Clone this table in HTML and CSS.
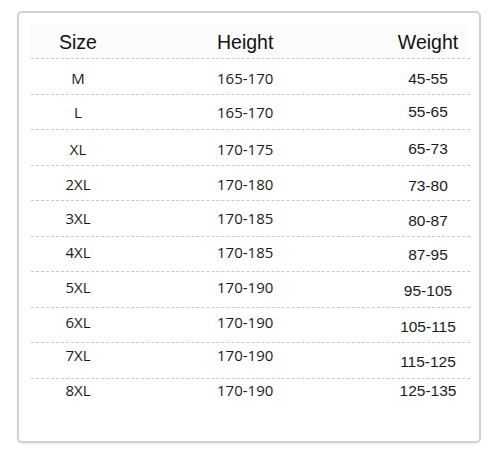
FILE: index.html
```html
<!DOCTYPE html>
<html>
<head>
<meta charset="utf-8">
<link rel="stylesheet" href="styles.css">
</head>
<body>
<div class="card">
  <div class="table">
    <div class="row head"><div class="c1">Size</div><div class="c2">Height</div><div class="c3">Weight</div></div>
    <div class="row r1"><div class="c1">M</div><div class="c2">165-170</div><div class="c3">45-55</div></div>
    <div class="row r2"><div class="c1">L</div><div class="c2">165-170</div><div class="c3">55-65</div></div>
    <div class="row r3"><div class="c1">XL</div><div class="c2">170-175</div><div class="c3">65-73</div></div>
    <div class="row r4"><div class="c1">2XL</div><div class="c2">170-180</div><div class="c3">73-80</div></div>
    <div class="row r5"><div class="c1">3XL</div><div class="c2">170-185</div><div class="c3">80-87</div></div>
    <div class="row r6"><div class="c1">4XL</div><div class="c2">170-185</div><div class="c3">87-95</div></div>
    <div class="row r7"><div class="c1">5XL</div><div class="c2">170-190</div><div class="c3">95-105</div></div>
    <div class="row r8"><div class="c1">6XL</div><div class="c2">170-190</div><div class="c3">105-115</div></div>
    <div class="row r9"><div class="c1">7XL</div><div class="c2">170-190</div><div class="c3">115-125</div></div>
    <div class="row r10 last"><div class="c1">8XL</div><div class="c2">170-190</div><div class="c3">125-135</div></div>
  </div>
</div>
</body>
</html>
```

FILE: styles.css
```css
html, body {
  margin: 0;
  padding: 0;
  background: #ffffff;
}
body {
  width: 500px;
  height: 455px;
  overflow: hidden;
}
.card {
  box-sizing: border-box;
  margin: 11px 0 0 17px;
  width: 464px;
  height: 432px;
  border: 2px solid #d2d2d2;
  border-radius: 5px;
  box-shadow: 0 1px 2px rgba(0,0,0,0.08);
  background: #fff;
  padding: 10.5px 9px 0 12px;
}
.table {
  display: flex;
  flex-direction: column;
}
.row {
  display: grid;
  grid-template-columns: 94px 261px 84px;
  height: 35.5px;
  box-sizing: border-box;
  border-bottom: 1px dashed #c9c9c9;
  align-items: start;
  font-family: "Open Sans", "Noto Sans", sans-serif;
  font-size: 15px;
  color: #1a1a1a;
  --a: 8px;
  --b: 10px;
}
.row.last {
  border-bottom: none;
}
.row.head {
  background: #fcfcfc;
  font-family: "Liberation Sans", Arial, sans-serif;
  font-size: 19.5px;
  color: #111;
  align-items: center;
  padding-top: 4px;
  --a: 0px;
  --b: 0px;
}
.c1 {
  text-align: center;
  padding-top: var(--a);
}
.c2 {
  padding-left: 92px;
  padding-top: var(--a);
}
.c3 {
  text-align: center;
  font-family: "Liberation Sans", Arial, sans-serif;
  font-size: 15.5px;
  padding-top: var(--b);
}
.head .c3 {
  font-size: 19.5px;
}
.r1 { --a: 8.8px; --b: 10.8px; }
.r2 { --a: 7.1px; --b: 8.8px; }
.r3 { --a: 9px; --b: 9.6px; }
.r4 { --a: 8.1px; --b: 11.8px; }
.r5 { --a: 7.3px; --b: 11.3px; }
.r6 { --a: 5.8px; --b: 9.8px; }
.r7 { --a: 4.8px; --b: 10.1px; }
.r8 { --a: 4.8px; --b: 10.8px; }
.r9 { --a: 1.6px; --b: 10.3px; }
.r10 { --a: 1.3px; --b: 3.3px; }
```
